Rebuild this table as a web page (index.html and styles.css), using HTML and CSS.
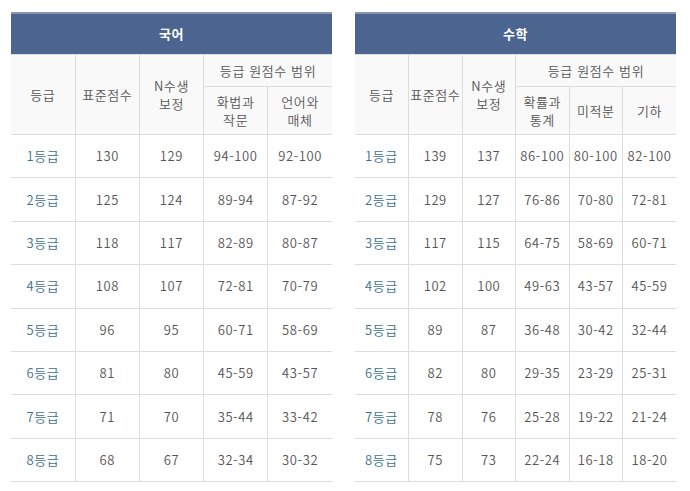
FILE: index.html
```html
<!DOCTYPE html>
<html lang="ko">
<head>
<meta charset="utf-8">
<link rel="stylesheet" href="styles.css">
</head>
<body>
<div class="wrap">
  <table class="grade">
    <colgroup><col><col><col><col><col></colgroup>
    <tr class="title"><th colspan="5">국어</th></tr>
    <tr class="h1">
      <th rowspan="2">등급</th>
      <th rowspan="2">표준점수</th>
      <th rowspan="2">N수생<br>보정</th>
      <th colspan="2">등급 원점수 범위</th>
    </tr>
    <tr class="h2">
      <th>화법과<br>작문</th>
      <th>언어와<br>매체</th>
    </tr>
    <tr><td class="g">1등급</td><td>130</td><td>129</td><td>94-100</td><td>92-100</td></tr>
    <tr><td class="g">2등급</td><td>125</td><td>124</td><td>89-94</td><td>87-92</td></tr>
    <tr><td class="g">3등급</td><td>118</td><td>117</td><td>82-89</td><td>80-87</td></tr>
    <tr><td class="g">4등급</td><td>108</td><td>107</td><td>72-81</td><td>70-79</td></tr>
    <tr><td class="g">5등급</td><td>96</td><td>95</td><td>60-71</td><td>58-69</td></tr>
    <tr><td class="g">6등급</td><td>81</td><td>80</td><td>45-59</td><td>43-57</td></tr>
    <tr><td class="g">7등급</td><td>71</td><td>70</td><td>35-44</td><td>33-42</td></tr>
    <tr><td class="g">8등급</td><td>68</td><td>67</td><td>32-34</td><td>30-32</td></tr>
  </table>
  <table class="grade">
    <colgroup><col><col><col><col><col><col></colgroup>
    <tr class="title"><th colspan="6">수학</th></tr>
    <tr class="h1">
      <th rowspan="2">등급</th>
      <th rowspan="2">표준점수</th>
      <th rowspan="2">N수생<br>보정</th>
      <th colspan="3">등급 원점수 범위</th>
    </tr>
    <tr class="h2">
      <th>확률과<br>통계</th>
      <th>미적분</th>
      <th>기하</th>
    </tr>
    <tr><td class="g">1등급</td><td>139</td><td>137</td><td>86-100</td><td>80-100</td><td>82-100</td></tr>
    <tr><td class="g">2등급</td><td>129</td><td>127</td><td>76-86</td><td>70-80</td><td>72-81</td></tr>
    <tr><td class="g">3등급</td><td>117</td><td>115</td><td>64-75</td><td>58-69</td><td>60-71</td></tr>
    <tr><td class="g">4등급</td><td>102</td><td>100</td><td>49-63</td><td>43-57</td><td>45-59</td></tr>
    <tr><td class="g">5등급</td><td>89</td><td>87</td><td>36-48</td><td>30-42</td><td>32-44</td></tr>
    <tr><td class="g">6등급</td><td>82</td><td>80</td><td>29-35</td><td>23-29</td><td>25-31</td></tr>
    <tr><td class="g">7등급</td><td>78</td><td>76</td><td>25-28</td><td>19-22</td><td>21-24</td></tr>
    <tr><td class="g">8등급</td><td>75</td><td>73</td><td>22-24</td><td>16-18</td><td>18-20</td></tr>
  </table>
</div>
</body>
</html>
```

FILE: styles.css
```css
html, body {
  margin: 0;
  padding: 0;
  background: #fff;
}
body {
  font-family: "Noto Sans CJK KR", "Noto Sans", sans-serif;
  font-size: 13px;
  font-weight: 350;
  color: #555;
  letter-spacing: 0.6px;
}
.wrap {
  display: flex;
  gap: 23px;
  padding: 12px 0 0 11px;
}
.grade {
  width: 321px;
  border-collapse: collapse;
  table-layout: fixed;
}
.grade th, .grade td {
  text-align: center;
  vertical-align: middle;
  padding: 0;
  line-height: 18px;
  border: 1px solid #dcdcdc;
  font-weight: 350;
}
.grade tr > :first-child { border-left: none; }
.grade tr > :last-child { border-right: none; }
.grade .h2 > :first-child { border-left: 1px solid #dcdcdc; }
.title th {
  background: #4b6590;
  color: #fff;
  font-weight: bold;
  height: 40px;
  border: none;
  border-top: 2px solid #8c96a6;
}
.h1 th {
  background: #f9f9f9;
  height: 31px;
}
.h2 th {
  background: #f9f9f9;
  height: 47px;
}
.grade td {
  height: 42.4px;
  background: #fff;
}
.grade td.g {
  color: #3d7191;
}
```
